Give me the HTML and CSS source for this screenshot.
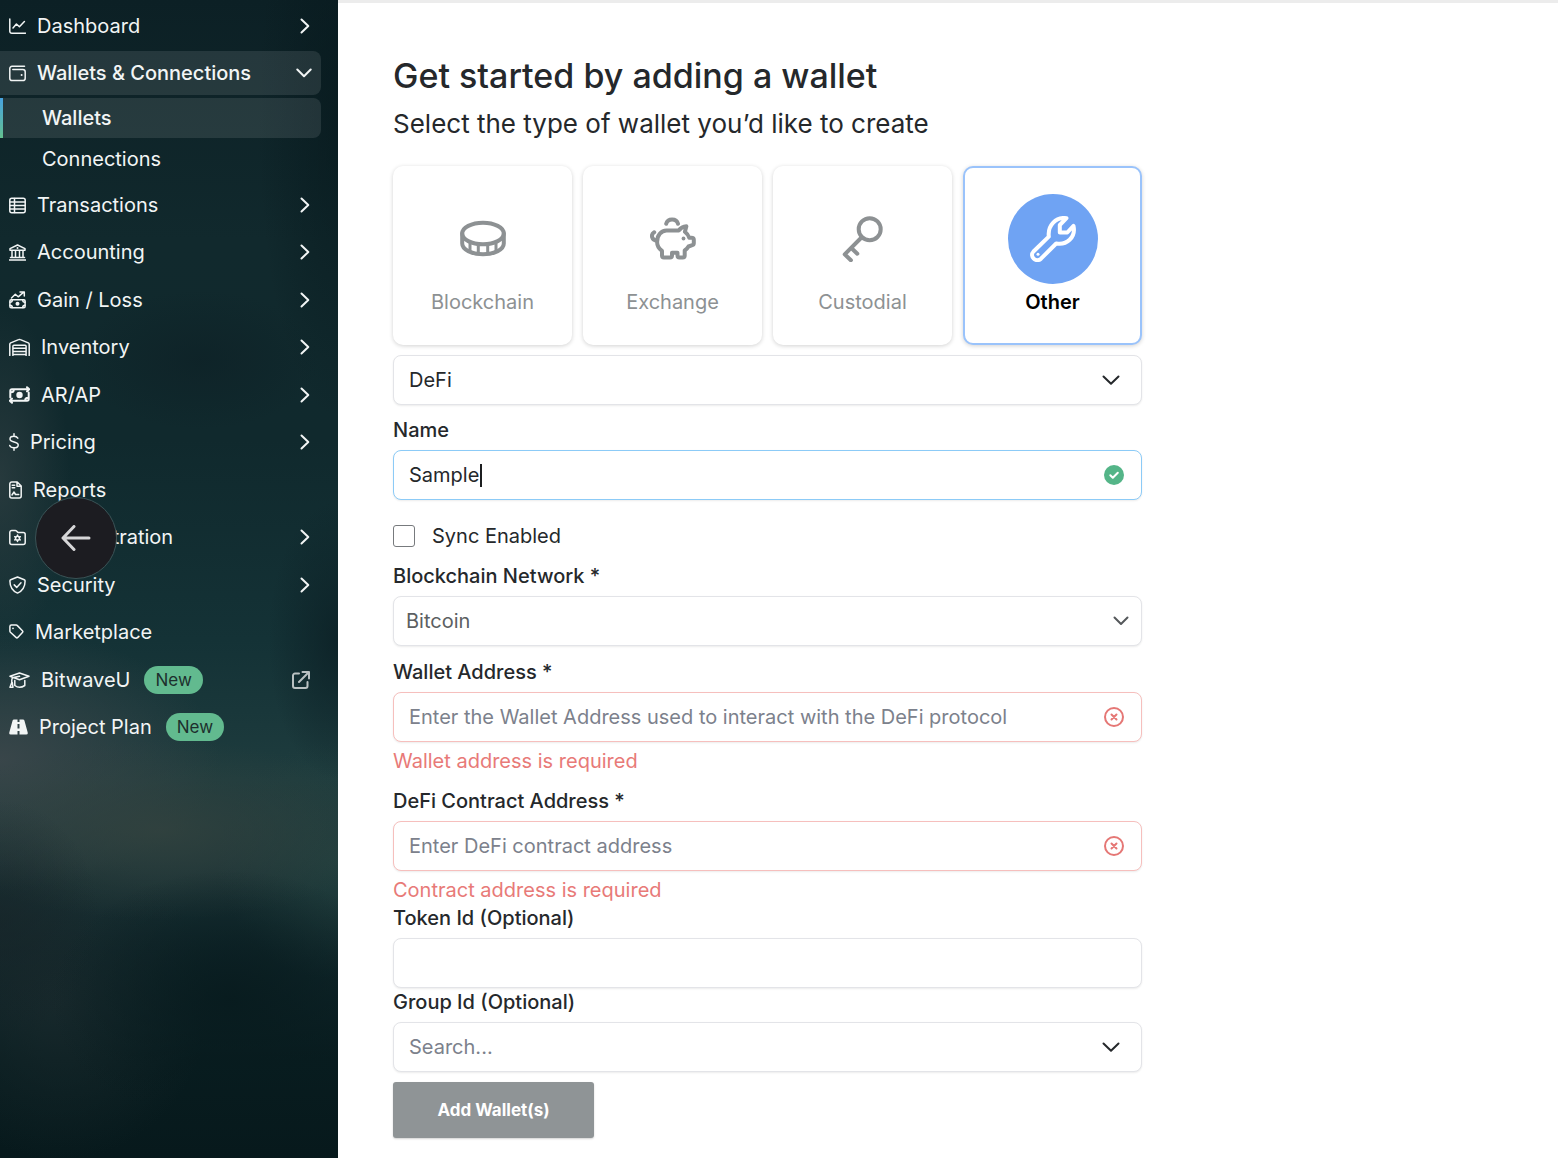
FILE: index.html
```html
<!DOCTYPE html>
<html lang="en">
<head>
<meta charset="utf-8">
<meta name="viewport" content="width=device-width, initial-scale=1">
<title>Add a wallet</title>
<link rel="stylesheet" href="styles.css">
</head>
<body>
<div class="app">
  <aside class="sidebar">
    <nav aria-label="Main">
      <ul class="menu">
        <li>
          <a class="menu-link" href="#dashboard">
            <svg class="icon" width="17" height="17" viewBox="0 0 17 17"><path d="M.8 1v12.2a2 2 0 0 0 2 2h13.7M4 10l3.4-4 3 2.8 5-5.2"/></svg>
            <span>Dashboard</span>
            <svg class="chevron" width="10" height="16" viewBox="0 0 10 16"><path d="M1.5 1.5 8.3 8l-6.8 6.5"/></svg>
          </a>
        </li>
        <li>
          <a class="menu-link is-open" href="#wallets-connections" aria-expanded="true">
            <svg class="icon" width="17" height="17" viewBox="0 0 17 17"><path d="M15.500 1.300H3A2.200 2.200 0 0 0 .8 3.500v9.700a2.400 2.400 0 0 0 2.400 2.400h10.600a2.400 2.400 0 0 0 2.400-2.400V6.800a2.400 2.400 0 0 0-2.400-2.400H3.800"/><circle class="solid" cx="12.600" cy="10" r="1"/></svg>
            <span>Wallets &amp; Connections</span>
            <svg class="chevron" width="16" height="10" viewBox="0 0 16 10"><path d="M1.300 1.500 8 8.200l6.700-6.700"/></svg>
          </a>
          <ul class="submenu">
            <li><a class="submenu-link is-current" href="#wallets" aria-current="page">Wallets</a></li>
            <li><a class="submenu-link" href="#connections">Connections</a></li>
          </ul>
        </li>
        <li>
          <a class="menu-link" href="#transactions">
            <svg class="icon" width="17" height="17" viewBox="0 0 17 17"><rect x=".8" y="1.300" width="15.400" height="14.400" rx="2"/><path d="M5.500 1.500v14M1 4.900h15M1 8.500h15M1 12.100h15"/></svg>
            <span>Transactions</span>
            <svg class="chevron" width="10" height="16" viewBox="0 0 10 16"><path d="M1.5 1.5 8.3 8l-6.8 6.5"/></svg>
          </a>
        </li>
        <li>
          <a class="menu-link" href="#accounting">
            <svg class="icon" width="17" height="17" viewBox="0 0 17 17"><path d="M1 6.200V4.700L8.500 1 16 4.700v1.500zM3 6.500V13M6.500 6.500V13M10.500 6.500V13M14 6.500V13M1.500 13.500h14M.3 16h16.400"/><circle class="solid" cx="8.500" cy="4" r="1"/></svg>
            <span>Accounting</span>
            <svg class="chevron" width="10" height="16" viewBox="0 0 10 16"><path d="M1.5 1.5 8.3 8l-6.8 6.5"/></svg>
          </a>
        </li>
        <li>
          <a class="menu-link" href="#gain-loss">
            <svg class="icon" width="17" height="18" viewBox="0 0 17 18"><path d="m2.500 7 3.800-3.700 2.900 2.500 5.500-4.600M11 1h4.300v4"/><rect x=".9" y="8.800" width="15.200" height="8" rx="1.200"/><circle class="solid" cx="8.500" cy="12.800" r="2"/><path d="M1 11.300q2.300 0 2.300-2.300M16 11.300q-2.300 0-2.300-2.300M1 14.300q2.300 0 2.300 2.300M16 14.300q-2.300 0-2.300 2.300"/></svg>
            <span>Gain / Loss</span>
            <svg class="chevron" width="10" height="16" viewBox="0 0 10 16"><path d="M1.5 1.5 8.3 8l-6.8 6.5"/></svg>
          </a>
        </li>
        <li>
          <a class="menu-link" href="#inventory">
            <svg class="icon" width="21" height="18" viewBox="0 0 21 18"><path d="M.8 17.500V6.300q0-1 .9-1.400l7.900-3.300q.9-.4 1.800 0l7.900 3.300q.9.400.9 1.400v11.200M3.900 17.500V8.200q0-1 1-1h11.200q1 0 1 1v9.300M4 10.300h13M4 13.400h13M4 16.500h13"/></svg>
            <span>Inventory</span>
            <svg class="chevron" width="10" height="16" viewBox="0 0 10 16"><path d="M1.5 1.5 8.3 8l-6.8 6.5"/></svg>
          </a>
        </li>
        <li>
          <a class="menu-link" href="#ar-ap">
            <svg class="icon heavy" width="21" height="18" viewBox="0 0 21 18"><path d="M1.300 11.500V5q0-1.700 1.700-1.700h16.500M18 1.200l2.200 2.100L18 5.400M19.700 6.500V13q0 1.700-1.700 1.700H1.500M3 12.600.8 14.700 3 16.800M2 6.200q2.800 0 2.800-2.500M19 11.800q-2.800 0-2.800 2.500"/><circle class="solid" cx="10.500" cy="9" r="3.200"/></svg>
            <span>AR/AP</span>
            <svg class="chevron" width="10" height="16" viewBox="0 0 10 16"><path d="M1.5 1.5 8.3 8l-6.8 6.5"/></svg>
          </a>
        </li>
        <li>
          <a class="menu-link" href="#pricing">
            <svg class="icon" width="10" height="18" viewBox="0 0 10 18"><path d="M5 .8v2.400M5 14.800v2.400M8.800 5.200C8 3.800 6.500 3.200 4.900 3.200 2.800 3.200 1 4.200 1 5.900c0 4 8.200 2 8.200 6 0 1.900-1.900 2.900-4.200 2.900-1.800 0-3.600-.8-4.300-2.300"/></svg>
            <span>Pricing</span>
            <svg class="chevron" width="10" height="16" viewBox="0 0 10 16"><path d="M1.5 1.5 8.3 8l-6.8 6.5"/></svg>
          </a>
        </li>
        <li>
          <a class="menu-link" href="#reports">
            <svg class="icon" width="13" height="18" viewBox="0 0 13 18"><path d="M2.800.9h5.400l4 4.200v9.900a2 2 0 0 1-2 2H2.800a2 2 0 0 1-2-2V2.900a2 2 0 0 1 2-2zM8 1v4.300h4M3.200 4.300h2.500M3.200 6.800h2.500M3 14l2-3 1.500 2.500h3.200"/></svg>
            <span>Reports</span>
          </a>
        </li>
        <li>
          <a class="menu-link" href="#administration">
            <svg class="icon" width="17" height="17" viewBox="0 0 17 17"><path d="M2.800 1.500h3.500q.7 0 1.200.5l1.100 1.100q.5.500 1.200.5h4.400a2 2 0 0 1 2 2v7.900a2 2 0 0 1-2 2H2.800a2 2 0 0 1-2-2v-10a2 2 0 0 1 2-2z"/><circle cx="8.500" cy="9.300" r="2"/><path d="M8.500 6v1.300M8.500 11.300v1.300M5.700 7.700l1 .6M10.300 10.300l1 .6M5.700 10.900l1-.6M10.300 8.300l1-.6"/></svg>
            <span>Administration</span>
            <svg class="chevron" width="10" height="16" viewBox="0 0 10 16"><path d="M1.5 1.5 8.3 8l-6.8 6.5"/></svg>
          </a>
        </li>
        <li>
          <a class="menu-link" href="#security">
            <svg class="icon" width="17" height="18" viewBox="0 0 17 18"><path d="m8.500 1 6.800 2.700q.8.300.8 1.200c0 5.300-2.400 9.800-7.600 12.200C3.300 14.700.9 10.200.9 4.900q0-.9.800-1.200zM5.200 8.900l2.500 2.500 4.300-4.700"/></svg>
            <span>Security</span>
            <svg class="chevron" width="10" height="16" viewBox="0 0 10 16"><path d="M1.5 1.5 8.3 8l-6.8 6.5"/></svg>
          </a>
        </li>
        <li>
          <a class="menu-link" href="#marketplace">
            <svg class="icon" width="15" height="16" viewBox="0 0 15 16"><path d="M.9 2.600q0-1.500 1.500-1.500h4.800q.7 0 1.200.5l5 5.100q.9.900 0 1.800l-4.600 4.900q-.9.900-1.800 0L1.400 8.300q-.5-.5-.5-1.200z"/><circle class="solid" cx="4" cy="4.300" r=".9"/></svg>
            <span>Marketplace</span>
          </a>
        </li>
        <li>
          <a class="menu-link" href="#bitwaveu">
            <svg class="icon" width="21" height="18" viewBox="0 0 21 18"><path d="M10.500 2 20 5.300l-9.500 3.400L1 5.300zM10.500 5.300 4.600 6.600Q2.800 7 2.800 9v2.500L1 16.300h3l-.7-4.800M5.800 9.500v5q4.700 3.500 10 0v-5"/></svg>
            <span>BitwaveU</span>
            <span class="badge">New</span>
            <svg class="external" width="18" height="18" viewBox="0 0 18 18"><path d="M7 2.500H3a2 2 0 0 0-2 2V15a2 2 0 0 0 2 2h10.500a2 2 0 0 0 2-2v-4M10.500 1H17v6.500M16.700 1.300 7 11"/></svg>
          </a>
        </li>
        <li>
          <a class="menu-link" href="#project-plan">
            <svg class="icon" width="19" height="16" viewBox="0 0 19 16"><path class="solid" d="M5 .5h3.500V3h2V.5H14q1 0 1.400 1l3.300 12q.5 2-1.500 2h-6.700v-3.500h-2v3.500H1.800q-2 0-1.500-2l3.300-12Q4 .5 5 .5zM8.500 5v4.500h2V5z" fill-rule="evenodd"/></svg>
            <span>Project Plan</span>
            <span class="badge">New</span>
          </a>
        </li>
      </ul>
    </nav>
    <button class="back" type="button" aria-label="Back">
      <svg width="30" height="26" viewBox="0 0 30 26"><path d="M28 13H2M13 1.500 2 13l11 11.500"/></svg>
    </button>
  </aside>

  <main class="main">
    <form class="wallet-form">
      <h1>Get started by adding a wallet</h1>
      <p class="lead">Select the type of wallet you’d like to create</p>

      <div class="types">
        <button class="type" type="button" aria-pressed="false">
          <span class="type-icon"><svg width="46" height="46" viewBox="0 0 46 46"><ellipse cx="23" cy="17.500" rx="20.800" ry="10.800"/><path d="M2.200 17.500v10C2.200 33.500 11.500 38.300 23 38.300s20.800-4.800 20.800-10.800v-10"/><path class="thin" d="M10 26.500v8M18.300 29v8M27.700 29v8M36 26.500v8"/></svg></span>
          <span>Blockchain</span>
        </button>
        <button class="type" type="button" aria-pressed="false">
          <span class="type-icon"><svg width="46" height="46" viewBox="0 0 46 46"><path d="M16.500 14.500h12.200c1.800-2.500 4.300-4 7.700-4.200l-1.500 5.500c2.100 1.700 3.600 3.600 4.400 6h2q2.500 0 2.500 2v3.400q0 1.500-1.500 2l-3.800 1.300c-.9 1.600-2.200 2.900-3.800 4v5q0 2-2 2h-3.200q-2 0-2-2v-2.700h-5.500v2.700q0 2-2 2H14q-2 0-2-2v-4.600c-3.100-2.400-4.900-5.600-4.900-9 0-6.300 4-11.400 9.400-11.400z"/><path d="M7 24.500c-5.500 0-6.500-6-2.800-8.200M16.200 7.800c1.500-5.800 10.300-5.800 11.800 0"/><circle class="dot" cx="33.500" cy="22.500" r="1.900"/></svg></span>
          <span>Exchange</span>
        </button>
        <button class="type" type="button" aria-pressed="false">
          <span class="type-icon"><svg width="46" height="46" viewBox="0 0 46 46"><circle cx="29.700" cy="13.200" r="11"/><path d="M21.500 21.500 4.700 38.300l6.200 5.900M11.300 32l6 5.700"/></svg></span>
          <span>Custodial</span>
        </button>
        <button class="type is-selected" type="button" aria-pressed="true">
          <span class="type-icon"><svg width="46" height="46" viewBox="0 0 46 46"><path d="M3.500 35.500 18.800 20.600C17.500 9.500 26 .5 36.500 2.200L29.800 9v7.500h7.500l6.200-6.600C46 21.500 36.500 29.500 26.200 27.500L11 42.700c-5 4.500-12-2.200-7.500-7.200z"/><circle class="dot" cx="8" cy="38.300" r="1.500"/></svg></span>
          <span>Other</span>
        </button>
      </div>

      <div class="control kind">
        <select aria-label="Wallet kind"><option>DeFi</option></select>
        <svg class="arrow" width="18" height="11" viewBox="0 0 18 11"><path d="m1.500 1.500 7.500 7.300 7.500-7.300"/></svg>
      </div>

      <div class="field name">
        <label for="name">Name</label>
        <div class="control is-focused">
          <input id="name" type="text" value="Sample">
          <span class="caret"></span>
          <svg class="status valid" width="20" height="20" viewBox="0 0 20 20"><circle cx="10" cy="10" r="10"/><path d="m6.300 10.300 2.500 2.500 5-5"/></svg>
        </div>
      </div>

      <label class="check"><input type="checkbox"> Sync Enabled</label>

      <div class="field network">
        <label for="network">Blockchain Network *</label>
        <div class="control is-compact">
          <select id="network"><option>Bitcoin</option></select>
          <svg class="arrow" width="16" height="10" viewBox="0 0 16 10"><path d="M1.500 1.500 8 8l6.500-6.500"/></svg>
        </div>
      </div>

      <div class="field spaced">
        <label for="address">Wallet Address *</label>
        <div class="control is-invalid">
          <input id="address" type="text" placeholder="Enter the Wallet Address used to interact with the DeFi protocol" aria-describedby="address-error">
          <svg class="status invalid" width="20" height="20" viewBox="0 0 20 20"><circle cx="10" cy="10" r="9"/><path d="m7.500 7.500 5 5M12.500 7.500l-5 5"/></svg>
        </div>
        <p class="error" id="address-error">Wallet address is required</p>
      </div>

      <div class="field spaced">
        <label for="contract">DeFi Contract Address *</label>
        <div class="control is-invalid">
          <input id="contract" type="text" placeholder="Enter DeFi contract address" aria-describedby="contract-error">
          <svg class="status invalid" width="20" height="20" viewBox="0 0 20 20"><circle cx="10" cy="10" r="9"/><path d="m7.500 7.500 5 5M12.500 7.500l-5 5"/></svg>
        </div>
        <p class="error" id="contract-error">Contract address is required</p>
      </div>

      <div class="field">
        <label for="token">Token Id (Optional)</label>
        <div class="control"><input id="token" type="text"></div>
      </div>

      <div class="field">
        <label for="group">Group Id (Optional)</label>
        <div class="control">
          <input id="group" type="text" role="combobox" placeholder="Search...">
          <svg class="arrow" width="18" height="11" viewBox="0 0 18 11"><path d="m1.500 1.500 7.500 7.300 7.500-7.300"/></svg>
        </div>
      </div>

      <button class="submit" type="submit">Add Wallet(s)</button>
    </form>
  </main>
</div>
</body>
</html>
```
FILE: styles.css
```css
* {
  box-sizing: border-box;
}

body {
  margin: 0;
  background: #fff;
  color: #25282b;
  font: 20px/28px Inter, "Liberation Sans", sans-serif;
}

h1, p, ul {
  margin: 0;
  padding: 0;
}

ul {
  list-style: none;
}

button, input, select {
  font: inherit;
  color: inherit;
}

svg {
  flex: none;
  fill: none;
  stroke: currentColor;
  stroke-linecap: round;
  stroke-linejoin: round;
}

.app {
  display: flex;
  min-height: 100vh;
}

/* Sidebar */

.sidebar {
  position: relative;
  flex: 0 0 338px;
  padding-top: 4px;
  color: #f2f5f5;
  background:
    radial-gradient(ellipse 180px 130px at 230px 1000px, #081b1ee6, #081b1e00),
    radial-gradient(ellipse 100px 120px at 0 920px, #18242899, #18242800),
    radial-gradient(ellipse 230px 90px at 160px 830px, #34433fcc, #34433f00),
    radial-gradient(ellipse 220px 130px at 0 760px, #3c474be6, #3c474b00),
    radial-gradient(ellipse 70px 170px at 0 480px, #2c3d40cc, #2c3d4000),
    radial-gradient(ellipse 120px 70px at 200px 360px, #0e2227cc, #0e222700),
    radial-gradient(ellipse 70px 140px at 338px 640px, #0c2025cc, #0c202500),
    radial-gradient(ellipse 120px 120px at 338px 860px, #23413fcc, #23413f00),
    radial-gradient(ellipse 150px 160px at 60px 1000px, #1a2a2dcc, #1a2a2d00),
    radial-gradient(ellipse 80px 300px at 338px 120px, #06171b99, #06171b00),
    linear-gradient(#0c2025 0, #11292d 240px, #10292d 440px, #143236 640px, #1e3c3e 780px, #1c3538 860px, #10272b 950px, #081c1f 1060px, #07191c);
}

.menu > li {
  margin-bottom: 3px;
}

.menu > li:nth-child(even) {
  margin-bottom: 4px;
}

.menu-link,
.submenu-link {
  display: flex;
  align-items: center;
  margin-right: 17px;
  color: inherit;
  text-decoration: none;
  border-radius: 0 8px 8px 0;
}

.menu-link {
  height: 44px;
  padding: 0 11px 0 9px;
  gap: 11px;
}

.menu-link.is-open {
  padding-right: 9px;
  font-weight: 500;
  background: #ffffff1a;
}

.icon {
  stroke-width: 1.5;
}

.icon.heavy {
  stroke-width: 2;
}

.solid {
  fill: currentColor;
  stroke: none;
}

.chevron,
.external {
  margin-left: auto;
  stroke-width: 2;
}

.external {
  color: #b9c1c2;
}

.submenu {
  display: grid;
  gap: 1px;
  margin-top: 3px;
}

.submenu-link {
  height: 40px;
  padding-left: 42px;
}

.submenu-link.is-current {
  font-weight: 500;
  background:
    linear-gradient(#48a3e0, #63c08f) left / 3px 100% no-repeat,
    #ffffff1a;
}

.badge {
  height: 28px;
  margin-left: 3px;
  padding: 0 11px;
  border-radius: 14px;
  background: #62ba8f;
  color: #1d2f2d;
  font-size: 17px;
}

.back {
  position: absolute;
  top: 497px;
  left: 35px;
  display: grid;
  place-items: center;
  width: 82px;
  height: 82px;
  padding: 0;
  border: 1px solid #3a5356;
  border-radius: 50%;
  background: #1c1c21;
  color: #d6d6d8;
}

.back svg {
  stroke-width: 3;
}

/* Form */

.main {
  flex: 1;
  min-width: 0;
  padding: 53px 55px 20px;
  border-top: 3px solid #ececec;
}

.wallet-form {
  max-width: 749px;
}

h1 {
  font-size: 34px;
  line-height: 40px;
  font-weight: 500;
}

.lead {
  margin-top: 12px;
  font-size: 26px;
  line-height: 32px;
}

.types {
  display: grid;
  grid-template-columns: repeat(4, 1fr);
  gap: 11px;
  margin-top: 26px;
}

.type {
  display: flex;
  flex-direction: column;
  align-items: center;
  gap: 4px;
  height: 179px;
  padding: 26px 0 0;
  border: 2px solid transparent;
  border-radius: 10px;
  background: #fff;
  color: #8d9193;
  box-shadow: 0 1px 4px #0000002e;
}

.type.is-selected {
  border-color: #9ac3fb;
  color: #000;
  font-weight: 600;
}

.type-icon {
  display: grid;
  place-items: center;
  width: 90px;
  height: 90px;
  border-radius: 50%;
  stroke-width: 4;
}

.is-selected .type-icon {
  background: #6fa3f3;
  color: #fff;
}

.thin {
  stroke-width: 3;
}

.dot {
  fill: currentColor;
  stroke: none;
}

.control {
  position: relative;
  display: flex;
  align-items: center;
  height: 50px;
  border: 1px solid #e3e4e8;
  border-radius: 8px;
  background: #fff;
  box-shadow: 0 1px 2px #00000014;
}

.control input,
.control select {
  flex: 1;
  min-width: 0;
  height: 100%;
  padding: 0 60px 0 15px;
  border: 0;
  outline: 0;
  border-radius: 8px;
  background: none;
  appearance: none;
}

.control ::placeholder {
  color: #7c818c;
  opacity: 1;
}

.control.is-compact select {
  padding-left: 12px;
  color: #5c5f62;
}

.control.is-focused {
  border-color: #8ccbf7;
}

.control.is-invalid {
  border-color: #f6bfbd;
}

.arrow,
.status {
  position: absolute;
  pointer-events: none;
}

.arrow {
  right: 21px;
  stroke-width: 2;
}

.is-compact .arrow {
  right: 12px;
  color: #55585b;
}

.status {
  right: 17px;
  stroke-width: 2;
}

.valid {
  color: #fff;
}

.valid circle {
  fill: #54b588;
  stroke: none;
}

.invalid {
  color: #e57775;
}

.caret {
  position: absolute;
  left: 86px;
  width: 2px;
  height: 23px;
  background: #1c1e20;
}

.kind {
  margin-top: 10px;
}

.field label {
  display: block;
  margin-bottom: 6px;
  font-weight: 500;
}

.name {
  margin-top: 11px;
}

.check {
  display: flex;
  align-items: center;
  gap: 17px;
  height: 32px;
  margin-top: 20px;
}

.check input {
  appearance: none;
  width: 22px;
  height: 22px;
  margin: 0;
  border: 1px solid #777a7d;
  border-radius: 3px;
  background: #fff;
}

.network {
  margin-top: 10px;
}

.spaced {
  margin-top: 12px;
}

.error {
  margin-top: 5px;
  color: #e87a78;
}

.submit {
  display: block;
  width: 201px;
  height: 56px;
  margin-top: 10px;
  border: 0;
  border-radius: 3px;
  background: #8f9496;
  color: #fff;
  font-size: 17px;
  font-weight: 700;
  box-shadow: 0 1px 2px #0000002e;
}
```
